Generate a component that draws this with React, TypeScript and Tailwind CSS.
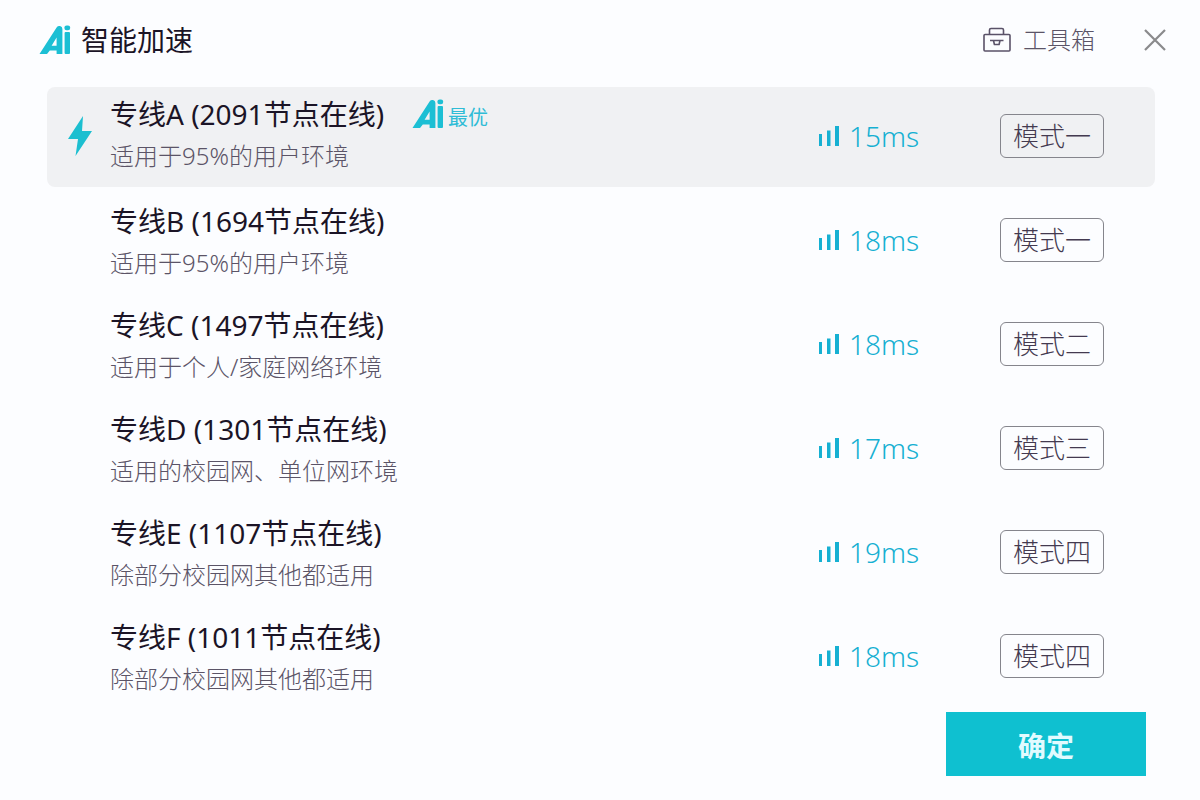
import { useState } from "react";
import { clsx } from "clsx";

type Line = {
  id: string;
  nodes: number;
  hint: string;
  ping: number;
  mode: string;
};

const lines: Line[] = [
  { id: "A", nodes: 2091, hint: "适用于95%的用户环境", ping: 15, mode: "模式一" },
  { id: "B", nodes: 1694, hint: "适用于95%的用户环境", ping: 18, mode: "模式一" },
  { id: "C", nodes: 1497, hint: "适用于个人/家庭网络环境", ping: 18, mode: "模式二" },
  { id: "D", nodes: 1301, hint: "适用的校园网、单位网环境", ping: 17, mode: "模式三" },
  { id: "E", nodes: 1107, hint: "除部分校园网其他都适用", ping: 19, mode: "模式四" },
  { id: "F", nodes: 1011, hint: "除部分校园网其他都适用", ping: 18, mode: "模式四" },
];

const AiLogo = ({ className }: { className?: string }) => (
  <svg aria-hidden="true" className={className} fill="none" viewBox="0 0 32 32">
    <path
      d="M0.5 30 L17.6 3.4 Q18.8 1.6 21 2 Q23.4 2.4 23.4 5 V30 H17.6 V26.4 H10.8 L8 30 Z M12.6 21.8 H17.6 V13.6 Z"
      fill="#1cbfd4"
      fillRule="evenodd"
    />
    <rect fill="#1cbfd4" height="22" rx="1" width="5.4" x="25.6" y="8" />
    <rect fill="#1cbfd4" height="4.8" rx="2.2" width="5.8" x="25.4" y="1.4" />
  </svg>
);

const Toolbox = () => (
  <svg
    aria-hidden="true"
    className="h-7 w-7"
    fill="none"
    stroke="#5a5268"
    strokeLinejoin="round"
    strokeWidth="1.6"
    viewBox="0 0 28 28"
  >
    <rect height="16.5" rx="1" width="26" x="1" y="8.5" />
    <path d="M6.5 8.5 V4 Q6.5 2.5 8 2.5 H19 Q20.5 2.5 20.5 4 V8.5" />
    <path d="M7 14.5 H20.5 M10.5 14.5 L11.4 18.5 H16.1 L17 14.5" />
  </svg>
);

const Close = () => (
  <svg
    aria-hidden="true"
    className="h-6 w-6"
    stroke="#8a8a8c"
    strokeWidth="2.2"
    viewBox="0 0 24 24"
  >
    <path d="M2 2 L22 22 M22 2 L2 22" />
  </svg>
);

const Bolt = () => (
  <svg aria-hidden="true" className="h-10 w-6" viewBox="0 0 24 40">
    <path d="M15 0 L0 23 H10 L7.5 40 L24 15 H14 Z" fill="#1cbfd0" />
  </svg>
);

const Signal = () => (
  <svg aria-hidden="true" className="h-5 w-5" fill="#16b0d2" viewBox="0 0 20 20">
    <rect height="12" width="3" x="0" y="8" />
    <rect height="15.5" width="3.5" x="8" y="4.5" />
    <rect height="20" width="4" x="16" y="0" />
  </svg>
);

type RowProps = { line: Line; selected: boolean; onSelect: () => void };

const Row = ({ line, selected, onSelect }: RowProps) => (
  <li
    className={clsx(
      "relative flex h-25 items-center rounded-lg pr-[51px] pb-0.5",
      selected && "bg-[#f0f1f3]"
    )}
  >
    <label className="flex flex-1 cursor-pointer items-center">
      <input
        checked={selected}
        className="sr-only"
        name="line"
        onChange={onSelect}
        type="radio"
      />
      <span className="flex w-[63px] shrink-0 justify-start pl-[21px]">
        {selected && <Bolt />}
      </span>
      <span className={clsx("flex flex-1 flex-col", selected ? "pb-0.5" : "pt-1")}>
        <span className="flex items-center gap-7 text-[28px] leading-[42px] text-[#1b1426]">
          {`专线${line.id} (${line.nodes}节点在线)`}
          {selected && (
            <span className="flex items-end gap-1 text-xl leading-6 text-[#2fbcd6]">
              <AiLogo className="h-8 w-8" />
              最优
            </span>
          )}
        </span>
        <span className="text-2xl leading-[42px] font-light text-[#5b5467]">
          {line.hint}
        </span>
      </span>
      <span className="flex w-[181px] items-center gap-2.5 text-[28px] leading-10 font-light text-[#16b0d2]">
        <Signal />
        {line.ping}ms
      </span>
    </label>
    <button
      className="h-11 w-26 cursor-pointer rounded-md border border-[#85858c] text-[26px] leading-10 font-light text-[#443a50]"
      type="button"
    >
      {line.mode}
    </button>
  </li>
);

export default function App() {
  const [current, setCurrent] = useState("A");

  return (
    <main className="flex min-h-screen flex-col bg-[#fcfdff] pr-[45px] pl-[47px] font-['Noto_Sans','Noto_Sans_CJK_SC',sans-serif]">
      <header className="-ml-2 flex h-[87px] items-start justify-between pt-5">
        <h1 className="flex items-center gap-2.5 text-[28px] leading-10 text-[#1b1426]">
          <AiLogo className="h-8 w-8" />
          智能加速
        </h1>
        <div className="-mr-3 flex h-10 items-center gap-12">
          <button
            className="flex cursor-pointer items-center gap-3 text-2xl leading-10 font-light text-[#5b5467]"
            type="button"
          >
            <Toolbox />
            工具箱
          </button>
          <button aria-label="关闭" className="cursor-pointer" type="button">
            <Close />
          </button>
        </div>
      </header>
      <ul className="flex flex-col gap-1">
        {lines.map((line) => (
          <Row
            key={line.id}
            line={line}
            onSelect={() => setCurrent(line.id)}
            selected={line.id === current}
          />
        ))}
      </ul>
      <footer className="flex justify-end pt-[5px] pr-[9px]">
        <button
          className="h-16 w-50 cursor-pointer bg-[#0fc0d0] pt-1 text-[28px] font-bold text-[#e2fbff]"
          type="button"
        >
          确定
        </button>
      </footer>
    </main>
  );
}
